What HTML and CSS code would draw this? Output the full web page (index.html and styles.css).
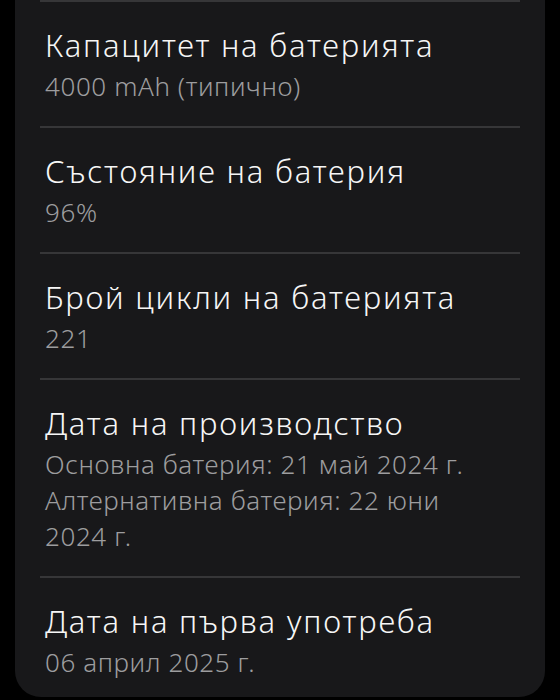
FILE: index.html
```html
<!DOCTYPE html>
<html lang="bg">
<head>
    <meta charset="UTF-8">
    <meta name="viewport" content="width=device-width, initial-scale=1.0">
    <title>Информация за батерията</title>
    <link rel="stylesheet" href="styles.css">
</head>
<body>
    <div class="card">
        <div class="row">
            <div class="row-title">Капацитет на батерията</div>
            <div class="row-value">4000 mAh (типично)</div>
        </div>
        <div class="row">
            <div class="row-title">Състояние на батерия</div>
            <div class="row-value">96%</div>
        </div>
        <div class="row">
            <div class="row-title">Брой цикли на батерията</div>
            <div class="row-value">221</div>
        </div>
        <div class="row">
            <div class="row-title">Дата на производство</div>
            <div class="row-value">Основна батерия: 21 май 2024 г.<br>Алтернативна батерия: 22 юни<br>2024 г.</div>
        </div>
        <div class="row last">
            <div class="row-title">Дата на първа употреба</div>
            <div class="row-value">06 април 2025 г.</div>
        </div>
    </div>
</body>
</html>
```

FILE: styles.css
```css
* {
    margin: 0;
    padding: 0;
    box-sizing: border-box;
}

body {
    background-color: #000;
    font-family: "Noto Sans", "Noto Sans CJK SC", sans-serif;
}

.card {
    margin: 0 15px;
    height: 697px;
    background-color: #18181a;
    border-radius: 0 0 26px 26px;
    overflow: hidden;
}

.row {
    margin: 0 25px;
    padding: 22px 5px 22px;
    border-top: 2px solid #363638;
}

.row.last {
    padding-bottom: 16px;
}

.row-title {
    color: #f6f6f6;
    font-size: 31px;
    font-weight: 350;
    line-height: 42px;
    letter-spacing: 1.8px;
    white-space: nowrap;
}

.row-value {
    margin-top: 2px;
    color: #9d9d9f;
    font-size: 26px;
    font-weight: 300;
    line-height: 36px;
    letter-spacing: 0.6px;
}
```
